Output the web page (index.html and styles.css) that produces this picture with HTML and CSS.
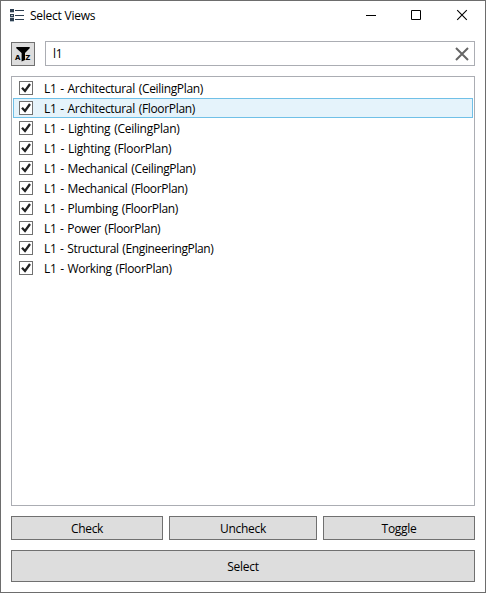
FILE: index.html
```html
<!DOCTYPE html>
<html lang="en">
<head>
<meta charset="utf-8">
<title>Select Views</title>
<link rel="stylesheet" href="styles.css">
</head>
<body>
<div class="window">
  <header class="titlebar">
    <svg class="app-icon" width="14" height="14" viewBox="0 0 14 14" shape-rendering="crispEdges">
      <path fill="#2c3e50" d="M0 0h4v3H0zM0 5h4v3H0zM0 9h4v3H0zM5 1h9v1H5zM5 6h9v1H5zM5 10h9v1H5z"/>
      <path fill="#b9c4cc" d="M1 6h2v1H1zM0 3h4v1H0zM0 8h4v1H0zM0 12h4v1H0z"/>
    </svg>
    <h1 class="title">Select Views</h1>
    <div class="controls">
      <svg width="46" height="29" viewBox="0 0 46 29"><path d="M18 14.5h10" stroke="#000"/></svg>
      <svg width="46" height="29" viewBox="0 0 46 29"><path d="M17.5 9.5h9v9h-9z" stroke="#000" fill="none"/></svg>
      <svg width="46" height="29" viewBox="0 0 46 29"><path d="M17.2 9.2l9.6 9.6M26.8 9.2l-9.6 9.6" stroke="#000" stroke-width="1.1"/></svg>
    </div>
  </header>
  <main class="content">
    <div class="search-row">
      <button class="filter" aria-label="Filter">
        <svg width="22" height="22" viewBox="0 0 22 22">
          <path d="M4.3 4h13.4v1.3L13 10v7L9.6 18.6V10L4.3 5.3z"/>
          <text x="2.9" y="17" class="icon-letter">A</text>
          <text x="13.3" y="17" class="icon-letter">Z</text>
        </svg>
      </button>
      <div class="search">
        <span class="query">l1</span>
        <svg width="14" height="14" viewBox="0 0 14 14"><path d="M1 1l12 12M13 1L1 13" stroke="#666" stroke-width="2"/></svg>
      </div>
    </div>
    <ul class="list">
      <li class="row"><i class="check"></i><span>L1 - Architectural (CeilingPlan)</span></li>
      <li class="row selected"><i class="check"></i><span>L1 - Architectural (FloorPlan)</span></li>
      <li class="row loose"><i class="check"></i><span>L1 - Lighting (CeilingPlan)</span></li>
      <li class="row loose"><i class="check"></i><span>L1 - Lighting (FloorPlan)</span></li>
      <li class="row"><i class="check"></i><span>L1 - Mechanical (CeilingPlan)</span></li>
      <li class="row"><i class="check"></i><span>L1 - Mechanical (FloorPlan)</span></li>
      <li class="row"><i class="check"></i><span>L1 - Plumbing (FloorPlan)</span></li>
      <li class="row tight"><i class="check"></i><span>L1 - Power (FloorPlan)</span></li>
      <li class="row tight"><i class="check"></i><span>L1 - Structural (EngineeringPlan)</span></li>
      <li class="row"><i class="check"></i><span>L1 - Working (FloorPlan)</span></li>
    </ul>
    <div class="actions">
      <button class="btn">Check</button>
      <button class="btn">Uncheck</button>
      <button class="btn">Toggle</button>
    </div>
    <button class="btn primary">Select</button>
  </main>
</div>
<script src="checks.js"></script>
</body>
</html>
```
FILE: styles.css
```css
* { box-sizing: border-box; }
body {
  margin: 0;
  font: 12px/16px "Open Sans", "Noto Sans", sans-serif;
  letter-spacing: -0.3px;
  color: #000;
}
.window {
  width: 486px;
  height: 593px;
  border: 1px solid #6d6d6d;
  background: #fff;
  display: flex;
  flex-direction: column;
}
.titlebar {
  height: 29px;
  display: flex;
  align-items: center;
  padding-left: 9px;
}
.app-icon { margin-top: 1px; }
.title { margin: 1px 0 0 6px; font-size: 12px; font-weight: 400; letter-spacing: -0.25px; }
.controls { margin: 0 -1px 0 auto; display: flex; }
.content {
  flex: 1;
  padding: 11px 10px 10px;
  display: flex;
  flex-direction: column;
}
.search-row { display: flex; align-items: flex-end; gap: 10px; height: 25px; }
.filter {
  width: 24px;
  height: 24px;
  padding: 0;
  border: 1px solid #707070;
  background: #ddd;
  display: flex;
}
.icon-letter { font: 700 7px "DejaVu Sans", sans-serif; letter-spacing: 0; }
.search {
  flex: 1;
  height: 25px;
  border: 1px solid #abadb3;
  padding: 0 5px 0 7px;
  display: flex;
  align-items: center;
  justify-content: space-between;
}
.query { padding-top: 1px; }
.list {
  list-style: none;
  margin: 10px 0;
  padding: 1px;
  height: 430px;
  border: 1px solid #abadb3;
}
.row {
  height: 20px;
  padding: 0 5px;
  border: 1px solid transparent;
  display: flex;
  align-items: center;
  letter-spacing: -0.33px;
  word-spacing: 1px;
}
.row span { padding-top: 2px; }
.loose { letter-spacing: -0.25px; }
.tight { letter-spacing: -0.38px; }
.selected { background: #e5f3fb; border-color: #70c0e7; }
.check {
  width: 14px;
  height: 14px;
  margin-right: 11px;
  border: 1px solid #707070;
  background: #fff;
}
.check svg { display: block; }
.actions { display: grid; grid-template-columns: 152px 148px 152px; gap: 6px; }
.btn {
  height: 24px;
  padding: 2px 0 0;
  border: 1px solid #707070;
  background: #ddd;
  color: #000;
  font: inherit;
  letter-spacing: inherit;
}
.primary { height: 32px; margin-top: 10px; }
```
FILE: checks.js
```js
document.querySelectorAll('.check').forEach(function (box) {
  box.innerHTML = '<svg width="12" height="12" viewBox="0 0 12 12"><path d="M2 5.7L5 9L10 2" fill="none" stroke="#212121" stroke-width="2.3"/></svg>';
});
```
